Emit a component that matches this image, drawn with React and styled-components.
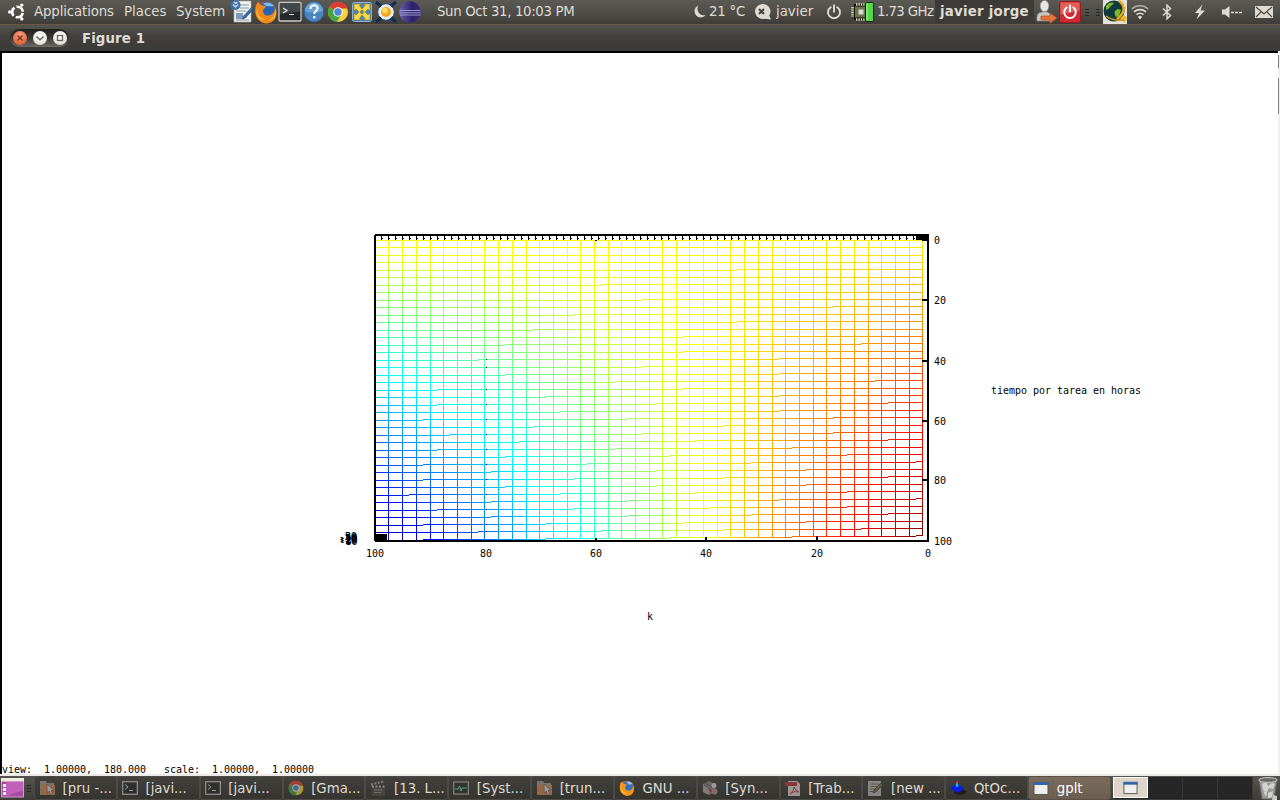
import React from 'react';
import styled, { createGlobalStyle } from 'styled-components';

const GlobalStyle = createGlobalStyle`
  * { box-sizing: border-box; }
  body { margin: 0; background: #fff; overflow: hidden; }
`;

const Desktop = styled.div`
  width: 1280px;
  height: 800px;
  display: flex;
  flex-direction: column;
  font-family: "DejaVu Sans", sans-serif;
  font-size: 13.33px;
  color: #dfdbd2;
  overflow: hidden;
`;

const Panel = styled.div`
  height: 24px;
  flex: none;
  display: flex;
  background: linear-gradient(#5b5a55, #4d4c47 55%, #3e3d39);
`;

const Cell = styled.div`
  flex: none;
  width: ${(p) => p.$w}px;
  height: 24px;
  padding-left: ${(p) => p.$pad || 0}px;
  display: flex;
  align-items: center;
  overflow: hidden;
  svg { display: block; flex: none; }
`;

const Label = styled.span`
  white-space: pre;
  line-height: ${(p) => p.$lh || 24}px;
  height: 24px;
  letter-spacing: ${(p) => p.$ls || 0}px;
  font-weight: ${(p) => (p.$bold ? 700 : 400)};
`;

const UserBox = styled(Cell)`
  background: #3c3b37;
`;

const TrayBox = styled(Cell)`
  background: #e4e0da;
`;

const TitleBar = styled.div`
  height: 27px;
  flex: none;
  display: flex;
  align-items: center;
  padding-left: 10px;
  border-top: 1px solid #6b5a43;
  background: linear-gradient(#55534d, #3f3e3a 50%, #3c3b37);
`;

const WindowButtons = styled.div`
  width: 59px;
  height: 18px;
  margin-right: 13px;
  padding: 0 0 0 3px;
  border-radius: 9px;
  background: linear-gradient(#22211f, #3a3935 50%, #6c6a65);
  display: flex;
  align-items: center;
  gap: 6px;
`;

const WindowButton = styled.span`
  width: 14px;
  height: 14px;
  flex: none;
  border-radius: 50%;
  background: ${(p) =>
    p.$close
      ? 'radial-gradient(circle at 50% 30%, #f9a083, #ea6a3e 65%, #cf4f26)'
      : 'radial-gradient(circle at 50% 30%, #ffffff, #e8e5df 65%, #c4c0b8)'};
  svg { display: block; }
`;

const WindowBody = styled.div`
  flex: none;
  height: 723px;
  display: flex;
  background: #fff;
`;

const Canvas = styled.div`
  width: 1278px;
  height: 723px;
  border-top: 2px solid #000;
  border-left: 2px solid #000;
  display: flex;
  flex-direction: column;
  color: #000;
  svg { display: block; flex: none; }
`;

const Edge = styled.div`
  width: 2px;
  background: #f2f0ee;
  display: flex;
  flex-direction: column;
  align-items: flex-start;
`;

const EdgeBar = styled.span`
  width: 1px;
  height: ${(p) => p.$h}px;
  margin-top: ${(p) => p.$gap}px;
  background: #85827e;
`;

const Status = styled.div`
  font: 10px/17px "DejaVu Sans Mono", monospace;
  letter-spacing: -0.02px;
  white-space: pre;
  height: 13px;
`;

const WindowFoot = styled.div`
  height: 2px;
  flex: none;
  background: #eceae7;
`;

const TaskPanel = styled.div`
  height: 24px;
  flex: none;
  display: flex;
  background: linear-gradient(#55544f, #3e3d39);
`;

const Tasks = styled.div`
  width: 1077px;
  display: flex;
`;

const Task = styled.div`
  flex: 1;
  height: 24px;
  padding: 0 0 0 4px;
  display: flex;
  align-items: center;
  border-radius: 3px;
  border: 1px solid ${(p) => (p.$active ? '#5b5046' : '#4c4b47')};
  background: ${(p) =>
    p.$active ? 'linear-gradient(#7b6c5c, #6b5e51)' : 'linear-gradient(#42413d, #35342f)'};
  color: ${(p) => (p.$active ? '#fff' : '#dfdbd2')};
  svg { opacity: ${(p) => (p.$dim ? 0.6 : 1)}; display: block; flex: none; width: 16px; height: 16px; margin-right: 7.6px; }
`;

const Pager = styled.div`
  display: flex;
  width: 140px;
  height: 22px;
  margin: 1px 0 0 2px;
  background: #262626;
`;

const Workspace = styled.div`
  width: 35px;
  height: 21px;
  border: ${(p) => (p.$current ? '1px solid #fff' : 'none')};
  border-right: ${(p) => (p.$current ? '1px solid #fff' : '1px solid #3a3937')};
  background: ${(p) => (p.$current ? '#ded5ca' : 'transparent')};
  display: flex;
  align-items: center;
  justify-content: center;
  svg { display: block; }
`;

const CREAM = '#dfdbd2';

/* ---------- panel icons ---------- */

const UbuntuLogo = () => (
  <svg width="20" height="20" viewBox="0 0 20 20" fill="none" stroke="#fff">
    <circle cx="10.5" cy="10" r="5.3" strokeWidth="2.6" strokeDasharray="8.900 2.200" strokeDashoffset="-1.100" />
    <g fill="#fff" stroke="none">
      <circle cx="2.700" cy="10" r="1.700" />
      <circle cx="14.800" cy="3.100" r="1.700" />
      <circle cx="14.800" cy="16.900" r="1.700" />
    </g>
  </svg>
);

const WriterIcon = () => (
  <svg width="24" height="24" viewBox="0 0 24 24">
    <path d="M4 1h17v21H4z" fill="#f1f1ef" stroke="#aaa" strokeWidth=".7" />
    <path d="M10 5h9M10 8h9M6 11h10M6 14h3M6 20h13" stroke="#8899a8" strokeWidth="1" />
    <path d="M6 13h7v6H6z" fill="#7d9ab8" />
    <path d="M22 7 13.5 16l-1 3 3-1L23.500 9z" fill="#356cae" stroke="#173f70" strokeWidth=".5" />
    <circle cx="5.500" cy="5" r="5" fill="#3d71a8" />
    <path d="M3 4.500 5.500 7 8 4.500M4 2l1.500 1.500L7.500 2" stroke="#dcecff" fill="none" strokeWidth="1.200" />
  </svg>
);

const FirefoxIcon = () => (
  <svg width="24" height="24" viewBox="0 0 24 24">
    <circle cx="12" cy="12" r="10.500" fill="#d9531a" />
    <circle cx="13" cy="9.500" r="7.800" fill="#2764b5" />
    <path d="M9 4c4-3 9-1 11 2-2 0-3 1-5 0-1 1-3 0-6-2z" fill="#7db6e8" />
    <path d="M2 5C3 3 4 2 5 2c0 2 1 3 3 3.500 2 0 3 1 4 1-1 2-3 2-3 4 0 3 2 5 5 5 4 0 7-3 7-8 3 7 1 15-8 16C5 24-1 15 2 5z" fill="#f08a1d" />
    <path d="M3 8c0 6 3 11 9 12-6 1-11-4-9-12z" fill="#fbc33a" />
    <path d="M21.500 8c.8 6-2 11-8 13 7-1 10-7 8-13z" fill="#fad046" />
  </svg>
);

const TerminalIcon = () => (
  <svg width="24" height="24" viewBox="0 0 24 24">
    <rect x="1" y="2.500" width="22" height="18.500" rx="1" fill="#25282a" stroke="#c9c9c5" strokeWidth="1.300" />
    <path d="M2 3.500h20v8L2 14z" fill="#43474a" />
    <path d="m5 8 4 2.500L5 13M11 14.500h5" stroke="#e8e8e8" strokeWidth="1.200" fill="none" />
  </svg>
);

const HelpIcon = () => (
  <svg width="24" height="24" viewBox="0 0 24 24">
    <circle cx="12" cy="12" r="10" fill="#4a85c0" stroke="#295c94" strokeWidth="1" />
    <path d="M3 11a9 9 0 0 1 18 0c-5 2-13 2-18 0z" fill="#6ea2d5" />
    <path d="M8.500 9c0-5 7.500-4.500 7.200-.6-.2 2.400-3.400 2.600-3.400 5.600" fill="none" stroke="#fff" strokeWidth="2" />
    <circle cx="12.300" cy="17.200" r="1.300" fill="#fff" />
  </svg>
);

const ChromeIcon = () => (
  <svg width="24" height="24" viewBox="0 0 24 24">
    <circle cx="12" cy="12" r="10" fill="#f8d33c" />
    <path d="M12 12 3.300 7A10 10 0 0 1 21.500 8.500H12z" fill="#dd3d31" />
    <path d="M12 12 3.300 7A10 10 0 0 0 11 22l4.500-8z" fill="#45a647" />
    <circle cx="12" cy="12" r="4.700" fill="#fff" />
    <circle cx="12" cy="12" r="3.700" fill="#4c87cf" />
  </svg>
);

const ArrowsIcon = () => (
  <svg width="24" height="24" viewBox="0 0 24 24">
    <rect x="2.500" y="2.500" width="19" height="19" rx="2" fill="#4b83c4" stroke="#85b2e2" />
    <g fill="#f8dc45" stroke="#9c7508" strokeWidth=".6">
      <path d="M4 4h7L9.500 5.500 12 9l3-3.500L13.500 4H20v7l-2-2-3 3 3 3 2-2v7h-6.500l1.500-1.500-3-3.500-2.500 3.500L11 20H4v-7l2 2 3-3-3-3-2 2z" />
    </g>
    <circle cx="12" cy="12" r="1.800" fill="#4b83c4" stroke="#9c7508" strokeWidth=".6" />
  </svg>
);

const OrbIcon = () => (
  <svg width="24" height="24" viewBox="0 0 24 24">
    <path d="m2 2 5 4M22 2l-5 4M2 22l5-4M22 22l-5-4" stroke="#102c55" strokeWidth="3" />
    <circle cx="12" cy="12" r="8.300" fill="#e9edf0" stroke="#2d4f7e" strokeWidth="1" />
    <path d="M5 7l3-3M19 7l-3-3M5 17l3 3M19 17l-3 3" stroke="#183864" strokeWidth="2" />
    <circle cx="12" cy="12" r="5" fill="#f2a81a" />
    <circle cx="11" cy="10.500" r="2.700" fill="#ffdf69" />
  </svg>
);

const EclipseIcon = () => (
  <svg width="24" height="24" viewBox="0 0 24 24">
    <defs>
      <linearGradient id="ecl" x1="0" x2="1">
        <stop offset="0" stopColor="#6b5fb0" /><stop offset=".6" stopColor="#2c2268" /><stop offset="1" stopColor="#392d83" />
      </linearGradient>
    </defs>
    <circle cx="12" cy="12" r="10.700" fill="url(#ecl)" />
    <path d="M1.500 10.500h21M1.300 12.800h21.400M2 15h20.500" stroke="#a7a5dc" strokeWidth=".9" />
  </svg>
);

const MoonIcon = () => (
  <svg width="14" height="14" viewBox="0 0 14 14"><path d="M5 .5A6.300 6.300 0 1 0 12.800 10C7 11.500 3 6 5 .5z" fill={CREAM} /></svg>
);

const ChatIcon = () => (
  <svg width="20" height="18" viewBox="0 0 20 18">
    <path d="M9 1a8 7.500 0 1 0 3 14.700l6 .8-1.800-4A8 7.500 0 0 0 9 1z" fill={CREAM} />
    <path d="m6 6 5 5m0-5-5 5" stroke="#44433f" strokeWidth="2" />
  </svg>
);

const PowerIcon = ({ size = 16, color = CREAM }) => (
  <svg width={size} height={size} viewBox="0 0 16 16" fill="none" stroke={color} strokeWidth="1.900" strokeLinecap="round">
    <path d="M8 1.200v6.600M4.800 3.200a6 6 0 1 0 6.400 0" />
  </svg>
);

const CpuIcon = () => (
  <svg width="25" height="24" viewBox="0 0 25 24">
    <rect x="4" y="4" width="15" height="16" fill="#11120e" />
    <path d="M6 4.500h10M6 19.500h10" stroke="#d9dca9" strokeWidth="2.400" strokeDasharray="1.400 1" />
    <path d="M2.500 7v10" stroke="#d9dca9" strokeWidth="2.400" strokeDasharray="1.400 1" />
    <rect x="5" y="6.500" width="11" height="11" fill="#69724f" />
    <rect x="8.500" y="9.500" width="5" height="5" fill="#d5d8cc" />
    <rect x="15.500" y="2.500" width="8" height="19" rx="1" fill="#54d84a" stroke="#11200c" />
    <path d="M17 4v16" stroke="#a1f395" />
  </svg>
);

const UserLeaveIcon = () => (
  <svg width="24" height="24" viewBox="0 0 24 24">
    <path d="M3 21c-.5-7 1-8 5-9h5c3 1 4 3 4 9z" fill="#c8c8c6" stroke="#8d8d8b" strokeWidth=".6" />
    <ellipse cx="10.500" cy="6" rx="4.300" ry="5.600" fill="#e6e6e4" stroke="#999" strokeWidth=".6" />
    <path d="M7 16h9v-3l7 5-7 5.500V20H7z" fill="#e8743a" stroke="#b54c1c" strokeWidth=".7" />
  </svg>
);

const ShutdownIcon = () => (
  <svg width="24" height="24" viewBox="0 0 24 24">
    <rect x="1.500" y="1.500" width="21" height="21" rx="2" fill="#cf2932" stroke="#9e1620" />
    <path d="M2.500 2.500h19v8l-19 4z" fill="#e36059" />
    <path d="M12 5.500v6M8.600 7.500a5.800 5.800 0 1 0 6.800 0" fill="none" stroke="#fff" strokeWidth="2" strokeLinecap="round" />
  </svg>
);

const Grip = () => (
  <svg width="21" height="24" viewBox="0 0 21 24" stroke="#272622"><path d="M3 9.500h4M3 12.500h4M3 15.500h4M14 9.500h4M14 12.500h4M14 15.500h4" /></svg>
);

const GlobeIcon = () => (
  <svg width="24" height="24" viewBox="0 0 24 24">
    <circle cx="11" cy="11" r="10.500" fill="#113b3f" />
    <path d="M3 6c3-4 6-4 8-3-1 2-3 2-4 4-1 2-3 2-4 3zM12 11c2-2 4-2 6-1l-2 6-3 1c-1-2-2-4-1-6z" fill="#82bb24" />
    <path d="M16 1c7 5 6 12-2 18" fill="none" stroke="#e8aa1c" strokeWidth="2.600" />
    <path d="M20 15.500 24 17l-2 6-5-4z" fill="#f2b928" />
    <path d="M3 16c5 4 10 5 18 4" fill="none" stroke="#cc981c" strokeWidth="1.500" />
  </svg>
);

const WifiIcon = () => (
  <svg width="18" height="16" viewBox="0 0 18 16" fill="none" stroke={CREAM} strokeWidth="1.600">
    <path d="M.8 5a12 12 0 0 1 16.400 0" opacity=".65" />
    <path d="M3 7.900a9 9 0 0 1 12 0" /><path d="M5.500 10.700a5.500 5.500 0 0 1 7 0" />
    <path d="M6.800 13a3 3 0 0 1 4.400 0L9 15.500z" fill={CREAM} stroke="none" />
  </svg>
);

const BluetoothIcon = () => (
  <svg width="10" height="16" viewBox="0 0 10 16"><path d="m1 4.500 7.500 7L5 14.800V1.200l3.500 3.300-7.500 7" fill="none" stroke={CREAM} strokeWidth="1.500" /></svg>
);

const BoltIcon = () => (
  <svg width="12" height="16" viewBox="0 0 12 16"><path d="M8.500.5 1 9h4L2.500 15.500 11 6.500H6.500z" fill={CREAM} /></svg>
);

const SpeakerIcon = () => (
  <svg width="22" height="14" viewBox="0 0 22 14">
    <path d="M1 4.500h3L8.500 1v12L4 9.500H1z" fill={CREAM} />
    <path d="M10 7.500h12" stroke={CREAM} strokeWidth="1.300" strokeDasharray="3 1" />
  </svg>
);

const MailIcon = () => (
  <svg width="18" height="12" viewBox="0 0 18 12">
    <rect width="18" height="12" rx=".5" fill={CREAM} />
    <path d="m1 1 8 7 8-7M1 11l5-5M17 11l-5-5" fill="none" stroke="#4b4a45" strokeWidth="1.200" />
  </svg>
);

/* ---------- taskbar icons ---------- */

const FolderIcon = () => (
  <svg viewBox="0 0 16 16">
    <path d="M1 1h6l1 2h7v12H1z" fill="#a39a91" /><path d="M2 5h14v10H2z" fill="#d6874f" />
    <path d="m8 4 .3 9 2-2 1.500 4 2-1-1.800-3.500H15z" fill="#ddd" stroke="#555" strokeWidth=".6" />
  </svg>
);
const SmallTerminal = () => (
  <svg viewBox="0 0 16 16">
    <rect x=".7" y="1.700" width="14.600" height="12.600" fill="#252a2a" stroke="#ccc" strokeWidth="1.200" />
    <path d="m3 4.500 3 2.500-3 2.500M7 10.500h4" fill="none" stroke="#ddd" />
  </svg>
);
const SmallChrome = () => (
  <svg viewBox="0 0 24 24">
    <circle cx="12" cy="12" r="11" fill="#f8d33c" />
    <path d="M12 12 2.500 6.500A11 11 0 0 1 22.500 8.500H12z" fill="#dd3d31" />
    <path d="M12 12 2.500 6.500A11 11 0 0 0 11 23l4.500-9z" fill="#45a647" />
    <circle cx="12" cy="12" r="5.500" fill="#fff" /><circle cx="12" cy="12" r="4.200" fill="#4c87cf" />
  </svg>
);
const ClapperIcon = () => (
  <svg viewBox="0 0 16 16">
    <path d="M2 7h13v9H2z" fill="#4d4d4b" /><path d="M2 6.500h13" stroke="#bbb" strokeWidth="2" strokeDasharray="2 1.500" />
    <path d="m1 4.500 13-3" stroke="#aaa" strokeWidth="2.200" strokeDasharray="2 1.500" /><path d="M4 10h9M4 12.500h7" stroke="#999" />
  </svg>
);
const MonitorIcon = () => (
  <svg viewBox="0 0 16 16">
    <rect x=".7" y="2" width="14.600" height="12" fill="#26332f" stroke="#b5b5b2" strokeWidth="1.200" />
    <path d="M2 9h3l1.500-3L8 11l1-3h5" fill="none" stroke="#83d9b2" />
  </svg>
);
const SmallFirefox = () => (
  <svg viewBox="0 0 24 24">
    <circle cx="12" cy="12" r="11" fill="#df5b16" /><circle cx="13" cy="10" r="8" fill="#2d73c5" />
    <path d="M11 3c4-2 8 0 9 3l-5 1z" fill="#8bc2ee" />
    <path d="M2 5l3-3c0 2 1 3 3 4l4 1-3 4c0 3 2 5 5 5 4 0 7-3 7-8 3 7 1 15-8 16C5 24-1 15 2 5z" fill="#f6951d" />
    <path d="M3 9c0 6 3 10 9 11-6 1-11-3-9-11z" fill="#ffd34d" />
  </svg>
);
const PackageIcon = () => (
  <svg viewBox="0 0 16 16">
    <path d="m1 4 6-3 6 3v8l-6 3-6-3z" fill="#8d8683" /><path d="m1 4 6 3v8l-6-3z" fill="#b5a9a5" />
    <path d="m2 5 6 4m-5-6 7 4" stroke="#555" /><circle cx="12" cy="5.500" r="2.500" fill="#d8d8d8" /><circle cx="12.500" cy="11.500" r="3" fill="#b58f91" />
    <path d="m6 9 4 1-1 3z" fill="#b03a44" />
  </svg>
);
const PdfIcon = () => (
  <svg viewBox="0 0 16 16">
    <path d="M3 1h9l3 3v12H3z" fill="#d8d6d3" /><path d="M0 2h12v4H0z" fill="#c22f35" />
    <path d="M5 14c3-2 4-5 4-7 1 3 3 4 5 5-4-1-7 0-9 2z" fill="none" stroke="#cc3a3c" />
  </svg>
);
const NoteIcon = () => (
  <svg viewBox="0 0 16 16">
    <path d="M1 1h13v15H1z" fill="#bbb" /><path d="M3 4h9M3 6.500h7M3 9h5M3 11.500h5" stroke="#666" />
    <path d="m14 3 2 2-7 7-3 1 1-3z" fill="#77713e" stroke="#333" strokeWidth=".6" />
  </svg>
);
const QtIcon = () => (
  <svg viewBox="0 0 16 16">
    <ellipse cx="10" cy="12" rx="6" ry="3" fill="#1f1e1c" />
    <path d="M.5 8C3 5 4 6 5.500 4.500h3C10 6 11 5 13.500 8c0 2-2 2-3 3.500-1.500 1.500-3.500 1.500-5 0C4.500 10 .5 10 .5 8z" fill="#0b1fe0" />
    <path d="M5.300 6C5.800 5 6 3 7 2.200 8 3 8.200 5 8.700 6 8 7 6 7 5.300 6z" fill="#15b9e8" />
    <path d="M6.500 3C6.600 2 6.700 1.500 7 1 7.300 1.500 7.400 2 7.500 3z" fill="#e92b20" stroke="#e92b20" />
  </svg>
);
const WindowIcon = () => (
  <svg width="15" height="15" viewBox="0 0 16 16">
    <rect x="1" y="2.500" width="14" height="12" fill="#eeeeeb" stroke="#555" strokeWidth="1" />
    <path d="M.5 2h15v3H.5z" fill="#3465a4" />
  </svg>
);
const DesktopIcon = () => (
  <svg width="23" height="20" viewBox="0 0 23 20">
    <rect x=".5" y="2" width="22" height="17" fill="#a94ba2" stroke="#d59ad0" />
    <path d="M5 4h17v9c-7 1-12 3-17 6z" fill="#c060b9" />
    <path d="M0 0h23v3.500H0z" fill="#efece0" />
    <path d="M2 6h3v3H2zM2 10h3v3H2zM2 14h3v3H2z" fill="#eee" />
  </svg>
);
const TrashIcon = () => (
  <svg width="20" height="23" viewBox="0 0 20 23">
    <path d="m1 3 3 19h12l3-19z" fill="#969694" stroke="#666" />
    <path d="m4 7 4-2 2 4 4-3 3 1-2 5-4-1-2 4-4-2zM5 14l4 1-1 5zM10 16l5-2-1 6-4 1z" fill="#d2d2cf" />
    <ellipse cx="10" cy="3" rx="9.200" ry="2.400" fill="#686866" stroke="#ccc" />
    <path d="m15 18 4 1v4h-5z" fill="#c7c7c3" />
  </svg>
);

/* ---------- surface plot ---------- */

const N = 40;
const columns = [
  375, 388, 402, 416, 430, 443, 457, 471, 484, 498, 512, 526, 539, 553, 567, 580, 594, 608, 621, 635, 649,
  662, 676, 689, 703, 717, 730, 744, 758, 772, 785, 799, 813, 826, 840, 854, 868, 881, 895, 909, 922,
];
/* sub-pixel remainder of each row's left end */
const rowOffsets = [
  0.3, 0.3, 0.3, 0.4, 0.29, 0.4, 0.275, 0.35, 0.434, 0.34, 0.403, 0.31, 0.384, 0.31, 0.37, 0.44, 0.334, 0.42, 0.476,
  0.425, 0.25, 0.23, 0.275, 0.36, 0.233, 0.3, 0.4, 0.29, 0.35, 0.27, 0.29, 0.23, 0.31, 0.37, 0.236, 0.33, 0.45, 0.37,
  0.37, 0.31, 0.39,
];
const gridX = (i) => columns[i];
const gridY = (i, j) => Math.floor(240 + rowOffsets[j] + 7.5 * j - (j / N) * 4.45 * (i / N));
const value = (i, j) => 0.635 + (j / N) * (-0.6 + 0.96 * (i / N));

const ramp = (v, c) => Math.round(255 * Math.max(0, Math.min(1, 1.5 - Math.abs(4 * v - c))));
const jet = (v) => `rgb(${ramp(v, 3)},${ramp(v, 2)},${ramp(v, 1)})`;

const Mesh = () => {
  const parts = [];
  for (let j = 0; j <= N; j++) {
    for (let i = 0; i <= N; i++) {
      const x = gridX(i);
      const y = gridY(i, j);
      if (i < N) {
        const x2 = gridX(i + 1);
        const y2 = gridY(i + 1, j);
        const mid = y === y2 ? x2 : Math.round((x + x2) / 2);
        const fill = jet(value(i + 0.5, j));
        parts.push(<rect key={`h${i}-${j}`} x={x} y={y} width={mid - x} height="1" fill={fill} />);
        if (mid !== x2) parts.push(<rect key={`s${i}-${j}`} x={mid} y={y2} width={x2 - mid} height="1" fill={fill} />);
      }
      if (j < N && i > 0) {
        parts.push(<rect key={`v${i}-${j}`} x={x} y={y} width="1" height={gridY(i, j + 1) - y + 1} fill={jet(value(i, j + 0.5))} />);
      }
    }
  }
  return <g>{parts}</g>;
};

const zTicks = Array.from({ length: 77 }, (_, n) => 381 + 7 * n);
const dots = [359, 367, 389, 404, 419, 434, 449, 464, 479, 494, 509, 524, 531];
const xLabels = [[375, '100'], [486, '80'], [596, '60'], [706, '40'], [817, '20'], [928, '0']];
const yLabels = [[240, '0'], [300, '20'], [361, '40'], [421, '60'], [480, '80'], [541, '100']];

const PlotText = styled.text`
  font: 10px "DejaVu Sans Mono", monospace;
  letter-spacing: -0.02px;
  fill: #000;
`;

const Plot = () => (
  <svg width="1276" height="708" viewBox="2 53 1276 708" shapeRendering="crispEdges">
    <Mesh />
    <g fill="#000">
      <rect x="375" y="234" width="554" height="2" />
      <rect x="374" y="235" width="2" height="306" />
      <rect x="375" y="540" width="554" height="2" />
      <rect x="927" y="235" width="2" height="307" />
      <rect x="916" y="234" width="12" height="6" />
      <rect x="922" y="239" width="6" height="2" />
      <rect x="375" y="534" width="12" height="7" />
      {zTicks.map((x) => (
        <React.Fragment key={x}>
          <rect x={x} y="236" width="1" height="4" />
          <rect x={x + 1} y="238" width="1" height="1" />
        </React.Fragment>
      ))}
      {[299, 360, 420, 479].map((y) => <rect key={y} x="922" y={y} width="6" height="2" />)}
      <rect x="595" y="538" width="2" height="3" />
      <rect x="705" y="537" width="2" height="4" />
      <rect x="816" y="536" width="2" height="5" />
      <rect x="595" y="240" width="2" height="1" />
      {dots.map((y) => <rect key={y} x="486" y={y} width="1" height="1" />)}
    </g>
    {xLabels.map(([x, t]) => <PlotText key={t} x={x} y="557" textAnchor="middle">{t}</PlotText>)}
    {yLabels.map(([y, t]) => <PlotText key={t} x="934" y={y + 4}>{t}</PlotText>)}
    {['-50', '-40', '-30', '-20', '-10', '-80'].map((t, n) => (
      <PlotText key={t} x={n % 2 ? 339.6 : 338.8} y={540 + n}>{t}</PlotText>
    ))}
    <PlotText x="991" y="394">tiempo por tarea en horas</PlotText>
    <PlotText x="647" y="620">k</PlotText>
  </svg>
);

const launchers = [WriterIcon, FirefoxIcon, TerminalIcon, HelpIcon, ChromeIcon, ArrowsIcon, OrbIcon, EclipseIcon];

const tasks = [
  ['[pru -...', FolderIcon, true],
  ['[javi...', SmallTerminal, true],
  ['[javi...', SmallTerminal, true],
  ['[Gma...', SmallChrome, true],
  ['[13. L...', ClapperIcon, true],
  ['[Syst...', MonitorIcon, true],
  ['[trun...', FolderIcon, true],
  ['GNU ...', SmallFirefox, false],
  ['[Syn...', PackageIcon, true],
  ['[Trab...', PdfIcon, true],
  ['[new ...', NoteIcon, true],
  ['QtOc...', QtIcon, false],
  ['gplt', WindowIcon, false],
];

export default function App() {
  return (
    <Desktop>
      <GlobalStyle />
      <Panel>
        <Cell $w={34} $pad={7}><UbuntuLogo /></Cell>
        <Cell $w={90}><Label $ls={-0.13}>Applications</Label></Cell>
        <Cell $w={52}><Label>Places</Label></Cell>
        <Cell $w={54}><Label $ls={-0.1}>System</Label></Cell>
        {launchers.map((Icon, n) => <Cell key={n} $w={24}><Icon /></Cell>)}
        <Cell $w={270} $pad={15}><Label $ls={-0.36}>Sun Oct 31, 10:03 PM</Label></Cell>
        <Cell $w={17} $pad={1}><MoonIcon /></Cell>
        <Cell $w={44}><Label $ls={-0.2}>21 °C</Label></Cell>
        <Cell $w={23}><ChatIcon /></Cell>
        <Cell $w={48}><Label>javier</Label></Cell>
        <Cell $w={26} $pad={2}><PowerIcon /></Cell>
        <Cell $w={27}><CpuIcon /></Cell>
        <Cell $w={58}><Label $ls={-0.62}>1.73 GHz</Label></Cell>
        <UserBox $w={99} $pad={5}><Label $bold $ls={0.24}>javier jorge</Label></UserBox>
        <Cell $w={24}><UserLeaveIcon /></Cell>
        <Cell $w={24}><ShutdownIcon /></Cell>
        <Cell $w={21}><Grip /></Cell>
        <TrayBox $w={24}><GlobeIcon /></TrayBox>
        <Cell $w={26} $pad={4}><WifiIcon /></Cell>
        <Cell $w={28} $pad={9}><BluetoothIcon /></Cell>
        <Cell $w={38} $pad={13}><BoltIcon /></Cell>
        <Cell $w={28} $pad={2}><SpeakerIcon /></Cell>
        <Cell $w={33} $pad={8}><MailIcon /></Cell>
      </Panel>
      <TitleBar>
        <WindowButtons>
          <WindowButton $close>
            <svg width="14" height="14" viewBox="0 0 14 14"><path d="m4.500 4.500 5 5m0-5-5 5" stroke="#6b3522" strokeWidth="1.400" /></svg>
          </WindowButton>
          <WindowButton>
            <svg width="14" height="14" viewBox="0 0 14 14"><path d="m3.500 5.500 3.500 3.300 3.500-3.300" stroke="#66635d" strokeWidth="1.500" fill="none" /></svg>
          </WindowButton>
          <WindowButton>
            <svg width="14" height="14" viewBox="0 0 14 14"><rect x="4.500" y="4.500" width="5" height="5" stroke="#66635d" strokeWidth="1.300" fill="none" /></svg>
          </WindowButton>
        </WindowButtons>
        <Label $bold $lh={26} $ls={0.1}>Figure 1</Label>
      </TitleBar>
      <WindowBody>
        <Canvas>
          <Plot />
          <Status>{'view:  1.00000,  180.000   scale:  1.00000,  1.00000'}</Status>
        </Canvas>
        <Edge>
          <EdgeBar $gap={4} $h={13} />
          <EdgeBar $gap={10} $h={36} />
        </Edge>
      </WindowBody>
      <WindowFoot />
      <TaskPanel>
        <Cell $w={34} $pad={1}><DesktopIcon /><Grip /></Cell>
        <Tasks>
          {tasks.map(([text, Icon, dim], n) => (
            <Task key={n} $dim={dim} $active={text === 'gplt'}><Icon /><Label $lh={25}>{text}</Label></Task>
          ))}
        </Tasks>
        <Pager>
          <Workspace $current><WindowIcon /></Workspace>
          <Workspace /><Workspace /><Workspace />
        </Pager>
        <Cell $w={27} $pad={5}><TrashIcon /></Cell>
      </TaskPanel>
    </Desktop>
  );
}
